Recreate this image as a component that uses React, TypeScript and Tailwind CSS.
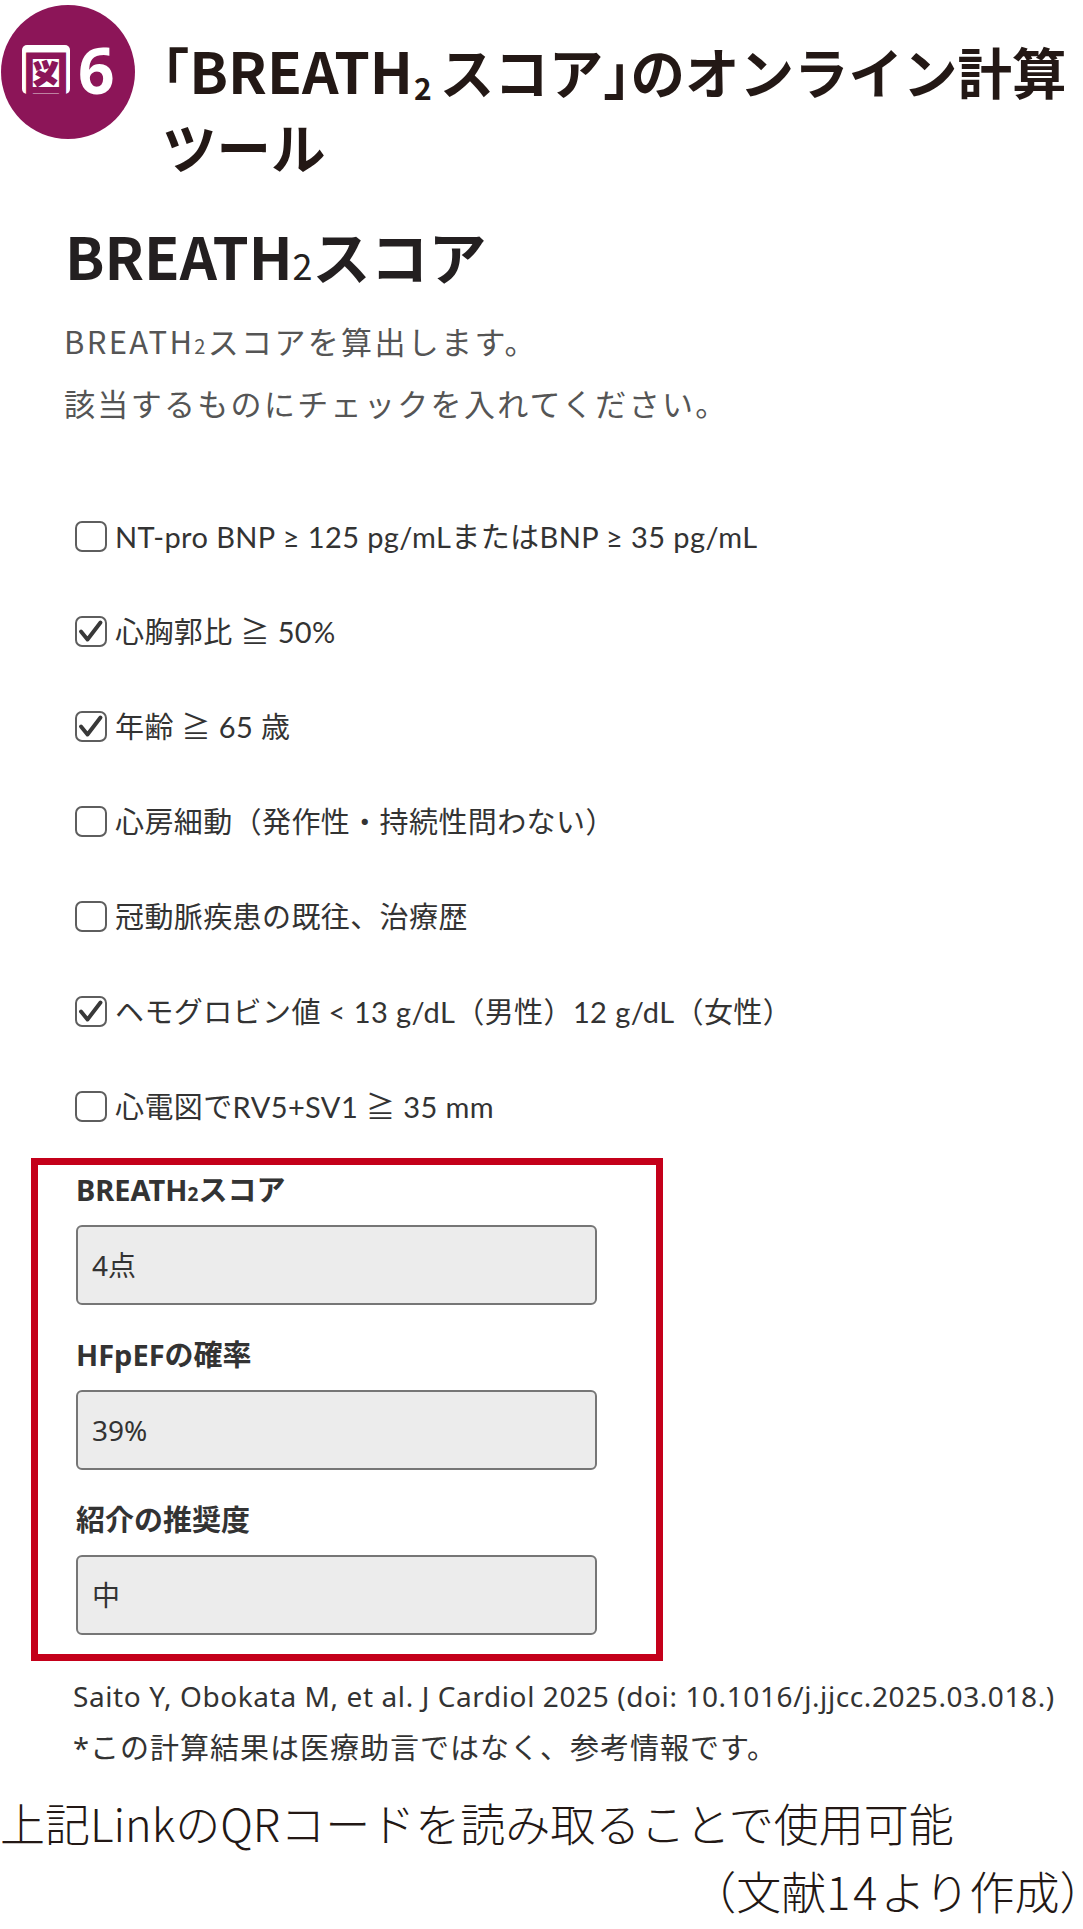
import React from "react";

const jp = "font-['Noto_Sans_CJK_JP',sans-serif]";
const web = "font-['Noto_Sans','Noto_Sans_CJK_JP',sans-serif]";
const row = "font-['Lato','Noto_Sans_CJK_JP',sans-serif]";

function Check({ checked }: { checked: boolean }) {
  return (
    <div className="w-[32px] h-[31px] shrink-0 rounded-[7px] border-2 border-[#5e5e5e] bg-white flex items-center justify-center">
      {checked && (
        <svg width="28" height="27" viewBox="0 0 28 27">
          <polyline
            points="4,13.5 10.5,21.5 23.5,4.5"
            fill="none"
            stroke="#383838"
            strokeWidth="3.9"
            strokeLinecap="round"
            strokeLinejoin="round"
          />
        </svg>
      )}
    </div>
  );
}

const items: { t: string; c: boolean }[] = [
  { t: "NT-pro BNP ≥ 125 pg/mLまたはBNP ≥ 35 pg/mL", c: false },
  { t: "心胸郭比 ≧ 50%", c: true },
  { t: "年齢 ≧ 65 歳", c: true },
  { t: "心房細動（発作性・持続性問わない）", c: false },
  { t: "冠動脈疾患の既往、治療歴", c: false },
  { t: "ヘモグロビン値 < 13 g/dL（男性）12 g/dL（女性）", c: true },
  { t: "心電図でRV5+SV1 ≧ 35 mm", c: false },
];

function Field({ label, value, first }: { label: React.ReactNode; value: string; first?: boolean }) {
  return (
    <div className={first ? "" : "mt-[32px]"}>
      <div className="text-[29px] leading-[36px] font-bold text-[#333333] whitespace-nowrap">{label}</div>
      <div className="mt-[17px] w-[521px] h-[80px] rounded-[6px] border-2 border-[#767676] bg-[#ececec] flex items-center pl-[14px] text-[28px] text-[#333333]">
        {value}
      </div>
    </div>
  );
}

export default function App() {
  return (
    <div className="w-[1083px] h-[1929px] overflow-hidden bg-white">
      {/* header */}
      <div className="flex items-start">
        <div className="mt-[5px] ml-[1px] w-[134px] h-[134px] shrink-0 rounded-full bg-[#8c1558] flex items-center pl-[21px] pb-[5px] gap-[8px]">
          <div className={`w-[48px] h-[49px] rounded-[5px] bg-white flex items-center justify-center text-[#8c1558] font-black text-[46px] leading-none ${jp}`}>
            図
          </div>
          <div className="font-['Noto_Sans',sans-serif] font-bold text-[64px] leading-none text-white">6</div>
        </div>
        <div className={`ml-[27px] mt-[32px] ${jp} font-bold text-[54.5px] leading-[75px] text-[#231815] whitespace-nowrap`}>
          <div>
            <span className="[font-feature-settings:'halt']">「</span>
            <span className="text-[57px]">BREATH</span>
            <span className="ml-[1px] mr-[8px] text-[30px] leading-none align-[-6px]">2</span>
            スコア<span className="[font-feature-settings:'halt']">」</span>のオンライン計算
          </div>
          <div>ツール</div>
        </div>
      </div>

      {/* web heading */}
      <div className={`mt-[37px] pl-[65px] ${jp} font-bold text-[58px] leading-[70px] text-[#231f20] whitespace-nowrap`}>
        BREATH<span className="text-[36px] leading-none font-normal">2</span>スコア
      </div>

      <div className={`mt-[20px] pl-[64px] ${jp} text-[31px] leading-[62px] tracking-[0.075em] text-[#555555] whitespace-nowrap`}>
        <div>
          BREATH<span className="text-[20px] leading-none">2</span>スコアを算出します。
        </div>
        <div>該当するものにチェックを入れてください。</div>
      </div>

      {/* checkboxes */}
      <div className={`mt-[55px] ${row}`}>
        {items.map((it, i) => (
          <div key={i} className="h-[95px] flex items-center pl-[75px] gap-[8px]">
            <Check checked={it.c} />
            <span className="text-[29px] leading-[40px] tracking-[0.4px] text-[#333333] whitespace-nowrap">{it.t}</span>
          </div>
        ))}
      </div>

      {/* result box */}
      <div className={`mt-[4px] ml-[31px] w-[632px] h-[503px] border-[7px] border-[#c4001a] pt-[7px] pl-[38px] ${web}`}>
        <Field
          first
          label={
            <>
              BREATH<span className="text-[19px] leading-none">2</span>スコア
            </>
          }
          value="4点"
        />
        <Field label="HFpEFの確率" value="39%" />
        <Field label="紹介の推奨度" value="中" />
      </div>

      {/* references */}
      <div className={`mt-[9px] pl-[73px] ${web} text-[#333333]`}>
        <div className="text-[28px] leading-[52px] tracking-[0.6px] whitespace-nowrap">
          Saito Y, Obokata M, et al. J Cardiol 2025 (doi: 10.1016/j.jjcc.2025.03.018.)
        </div>
        <div className="text-[29px] leading-[52px] tracking-[1px] whitespace-nowrap">
          *この計算結果は医療助言ではなく、参考情報です。
        </div>
      </div>

      {/* caption */}
      <div className={`mt-[19px] ${jp} font-light text-[45px] leading-[60px] text-[#231815] whitespace-nowrap`}>
        上記LinkのQRコードを読み取ることで使用可能
      </div>
      <div className={`mt-[8px] pr-[1px] text-right ${jp} font-light text-[45px] leading-[60px] text-[#231815] whitespace-nowrap`}>
        <span className="[font-feature-settings:'halt']">（</span>文献<span className="tracking-[3px]">14</span>より作成<span className="[font-feature-settings:'halt']">）</span>
      </div>
    </div>
  );
}
